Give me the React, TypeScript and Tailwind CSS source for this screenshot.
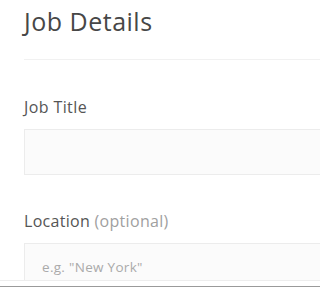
export default function App() {
  return (
    <div className="h-[288px] w-full overflow-hidden bg-white font-['Open_Sans',sans-serif]">
      <div className="h-[280px] pl-6 w-[360px]">
        <h1 className="pt-[5px] text-[25px] leading-[32px] tracking-[0.5px] text-[#474747] font-normal">Job Details</h1>
        <div className="mt-[22px] h-px bg-[#f1f1f1]" />

        <label className="block mt-[37px] text-[16px] leading-[20px] tracking-[0.4px] text-[#555]">Job Title</label>
        <div className="mt-[12px] h-[46px] border border-[#ececec] bg-[#fbfbfb]" />

        <label className="block mt-[36px] text-[16px] leading-[20px] tracking-[0.3px] text-[#555]">
          Location <span className="text-[#a0a0a0]">(optional)</span>
        </label>
        <div className="mt-[12px] h-[37px] border border-[#ececec] border-b-0 bg-[#fbfbfb] pl-[17px] pt-[14px] text-[13.5px] leading-[18px] tracking-[0.3px] text-[#aaa]">
          e.g. "New York"
        </div>
      </div>
      <div className="h-px bg-[#ededed]" />
      <div className="h-[5px] bg-white" />
      <div className="h-px bg-[#9a9a9a]" />
      <div className="h-px bg-white" />
    </div>
  );
}
